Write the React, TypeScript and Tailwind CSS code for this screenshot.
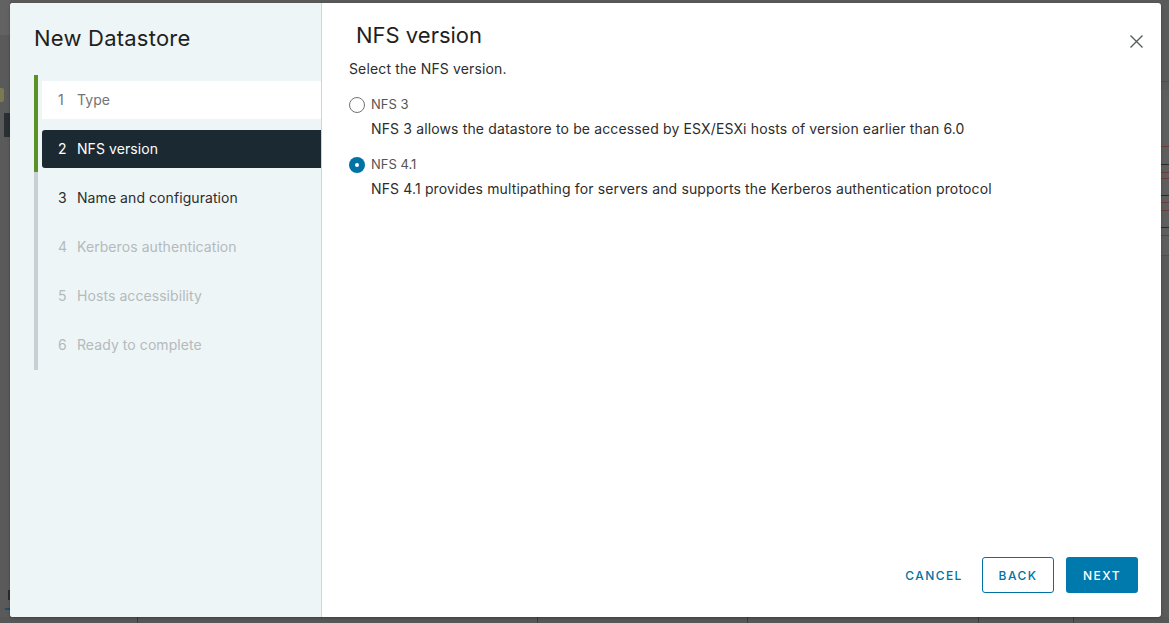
import React from "react";

const steps = [
  { n: 1, label: "Type", state: "done" },
  { n: 2, label: "NFS version", state: "active" },
  { n: 3, label: "Name and configuration", state: "next" },
  { n: 4, label: "Kerberos authentication", state: "disabled" },
  { n: 5, label: "Hosts accessibility", state: "disabled" },
  { n: 6, label: "Ready to complete", state: "disabled" },
];

function Step({ n, label, state }: { n: number; label: string; state: string }) {
  const base = "h-[38px] flex items-center pl-[16px] text-[14px] leading-[20px] tracking-[0.005em]";
  let cls = "";
  if (state === "done") cls = "bg-white text-[#6f7579]";
  else if (state === "active") cls = "bg-[#1b2a32] text-white rounded-l-[3px]";
  else if (state === "next") cls = "text-[#2d2d2d]";
  else cls = "text-[#b4babd]";
  return (
    <div className={`${base} ${cls}`}>
      <span className="w-[19px]">{n}</span>
      <span>{label}</span>
    </div>
  );
}

function Radio({ checked }: { checked: boolean }) {
  return checked ? (
    <span className="w-[16px] h-[16px] rounded-full bg-[#0072a3] flex items-center justify-center">
      <span className="w-[4px] h-[4px] rounded-full bg-white" />
    </span>
  ) : (
    <span className="w-[16px] h-[16px] rounded-full border border-[#737373] bg-white" />
  );
}

export default function App() {
  return (
    <div className="relative w-[1169px] h-[623px] overflow-hidden bg-[#5a5a5a] font-['Inter',sans-serif]">
      {/* dimmed background page bits */}
      <div className="absolute left-0 top-0 w-[10px] h-[35px] bg-[#626262]" />
      <div className="absolute left-0 top-[88px] w-[4px] h-[14px] bg-[#7a7a52] rounded-r-[2px]" />
      <div className="absolute left-[4px] top-[113px] w-[6px] h-[24px] bg-[#2a2f33]" />
      <div className="absolute left-[8px] top-[590px] w-[2px] h-[10px] bg-[#2d2d2d]" />
      <div className="absolute left-[5px] top-[608px] w-[5px] h-[2px] bg-[#1d4f6a]" />
      <div className="absolute left-[1161px] top-[81px] w-[8px] h-[1px] bg-[#4f4f4f]" />
      <div className="absolute left-[1161px] top-[90px] w-[8px] h-[165px] bg-[#5e5e5e]" />
      <div className="absolute left-[1161px] top-[146px] w-[8px] h-[1px] bg-[#6e3a3a]" />
      <div className="absolute left-[1161px] top-[164px] w-[8px] h-[1px] bg-[#2a2a2a]" />
      <div className="absolute left-[1161px] top-[172px] w-[8px] h-[1px] bg-[#6e3a3a]" />
      <div className="absolute left-[1161px] top-[178px] w-[8px] h-[1px] bg-[#6e3a3a]" />
      <div className="absolute left-[1161px] top-[195px] w-[8px] h-[1px] bg-[#2a2a2a]" />
      <div className="absolute left-[1161px] top-[202px] w-[8px] h-[1px] bg-[#6e3a3a]" />
      <div className="absolute left-[1161px] top-[210px] w-[8px] h-[1px] bg-[#6e3a3a]" />
      <div className="absolute left-[1161px] top-[227px] w-[8px] h-[1px] bg-[#2a2a2a]" />
      <div className="absolute left-[1161px] top-[235px] w-[8px] h-[1px] bg-[#6e3a3a]" />
      <div className="absolute left-[1161px] top-[255px] w-[8px] h-[1px] bg-[#4f4f4f]" />
      <div className="absolute left-0 top-[617px] w-full h-[6px] bg-[#575757]" />
      <div className="absolute left-[137px] top-[617px] w-[1px] h-[6px] bg-[#3c3c3c]" />
      <div className="absolute left-[537px] top-[617px] w-[1px] h-[6px] bg-[#3c3c3c]" />
      <div className="absolute left-[747px] top-[617px] w-[1px] h-[6px] bg-[#3c3c3c]" />
      <div className="absolute left-[978px] top-[617px] w-[1px] h-[6px] bg-[#3c3c3c]" />
      <div className="absolute left-[1073px] top-[617px] w-[1px] h-[6px] bg-[#3c3c3c]" />

      <div className="relative pt-[3px] pl-[10px]">
        <div className="w-[1151px] h-[614px] bg-white rounded-[3px] overflow-hidden flex shadow-[0_1px_3px_rgba(0,0,0,0.3)]">
          {/* sidebar */}
          <div className="w-[312px] shrink-0 bg-[#eef5f6] border-r border-[#cdd5d8] pl-[24px]">
            <div className="pt-[21px] text-[22px] leading-[28px] text-[#1f1f1f] font-normal tracking-[0.01em]">New Datastore</div>
            <div className="mt-[23px] flex">
              <div className="w-[4px] flex flex-col">
                <div className="h-[97px] bg-[#5a9228]" />
                <div className="h-[198px] bg-[#c9d0d3]" />
              </div>
              <div className="flex-1 pl-[4px] pt-[6px] flex flex-col gap-[11px]">
                {steps.map((s) => (
                  <Step key={s.n} {...s} />
                ))}
              </div>
            </div>
          </div>

          {/* content */}
          <div className="flex-1 flex flex-col pl-[27px] pr-[23px] pb-[24px]">
            <div className="h-[46px] flex items-start">
              <div className="ml-[7px] pt-[18px] text-[22px] leading-[28px] text-[#1f1f1f]">NFS version</div>
              <div className="flex-1" />
              <button className="mt-[28px] mr-[-8px] w-[20px] h-[20px] flex items-center justify-center text-[#555c60]">
                <svg width="13" height="13" viewBox="0 0 13 13" fill="none" stroke="currentColor" strokeWidth="1.4">
                  <path d="M0.5 0.5 L12.5 12.5 M12.5 0.5 L0.5 12.5" />
                </svg>
              </button>
            </div>
            <div className="mt-[10px] text-[14px] leading-[20px] text-[#2d2d2d] tracking-[0.01em]">Select the NFS version.</div>

            <div className="mt-[16px] h-[20px] flex items-center gap-[6px]">
              <Radio checked={false} />
              <span className="text-[13px] text-[#555]">NFS 3</span>
            </div>
            <div className="mt-[4px] pl-[22px] text-[14px] leading-[20px] text-[#2d2d2d] tracking-[0.01em]">
              NFS 3 allows the datastore to be accessed by ESX/ESXi hosts of version earlier than 6.0
            </div>

            <div className="mt-[16px] h-[20px] flex items-center gap-[6px]">
              <Radio checked={true} />
              <span className="text-[13px] text-[#555]">NFS 4.1</span>
            </div>
            <div className="mt-[4px] pl-[22px] text-[14px] leading-[20px] text-[#2d2d2d] tracking-[0.01em]">
              NFS 4.1 provides multipathing for servers and supports the Kerberos authentication protocol
            </div>

            <div className="flex-1" />
            <div className="flex justify-end gap-[12px]">
              <button className="w-[72px] h-[36px] pt-[2px] flex items-center justify-center text-[12px] font-medium tracking-[0.12em] text-[#0072a3] whitespace-nowrap">
                CANCEL
              </button>
              <button className="w-[72px] h-[36px] pt-[2px] flex items-center justify-center rounded-[3px] border border-[#0072a3] text-[12px] font-medium tracking-[0.12em] text-[#0072a3]">
                BACK
              </button>
              <button className="w-[72px] h-[36px] pt-[2px] flex items-center justify-center rounded-[3px] bg-[#0079ad] text-[12px] font-medium tracking-[0.12em] text-white">
                NEXT
              </button>
            </div>
          </div>
        </div>
      </div>
    </div>
  );
}
